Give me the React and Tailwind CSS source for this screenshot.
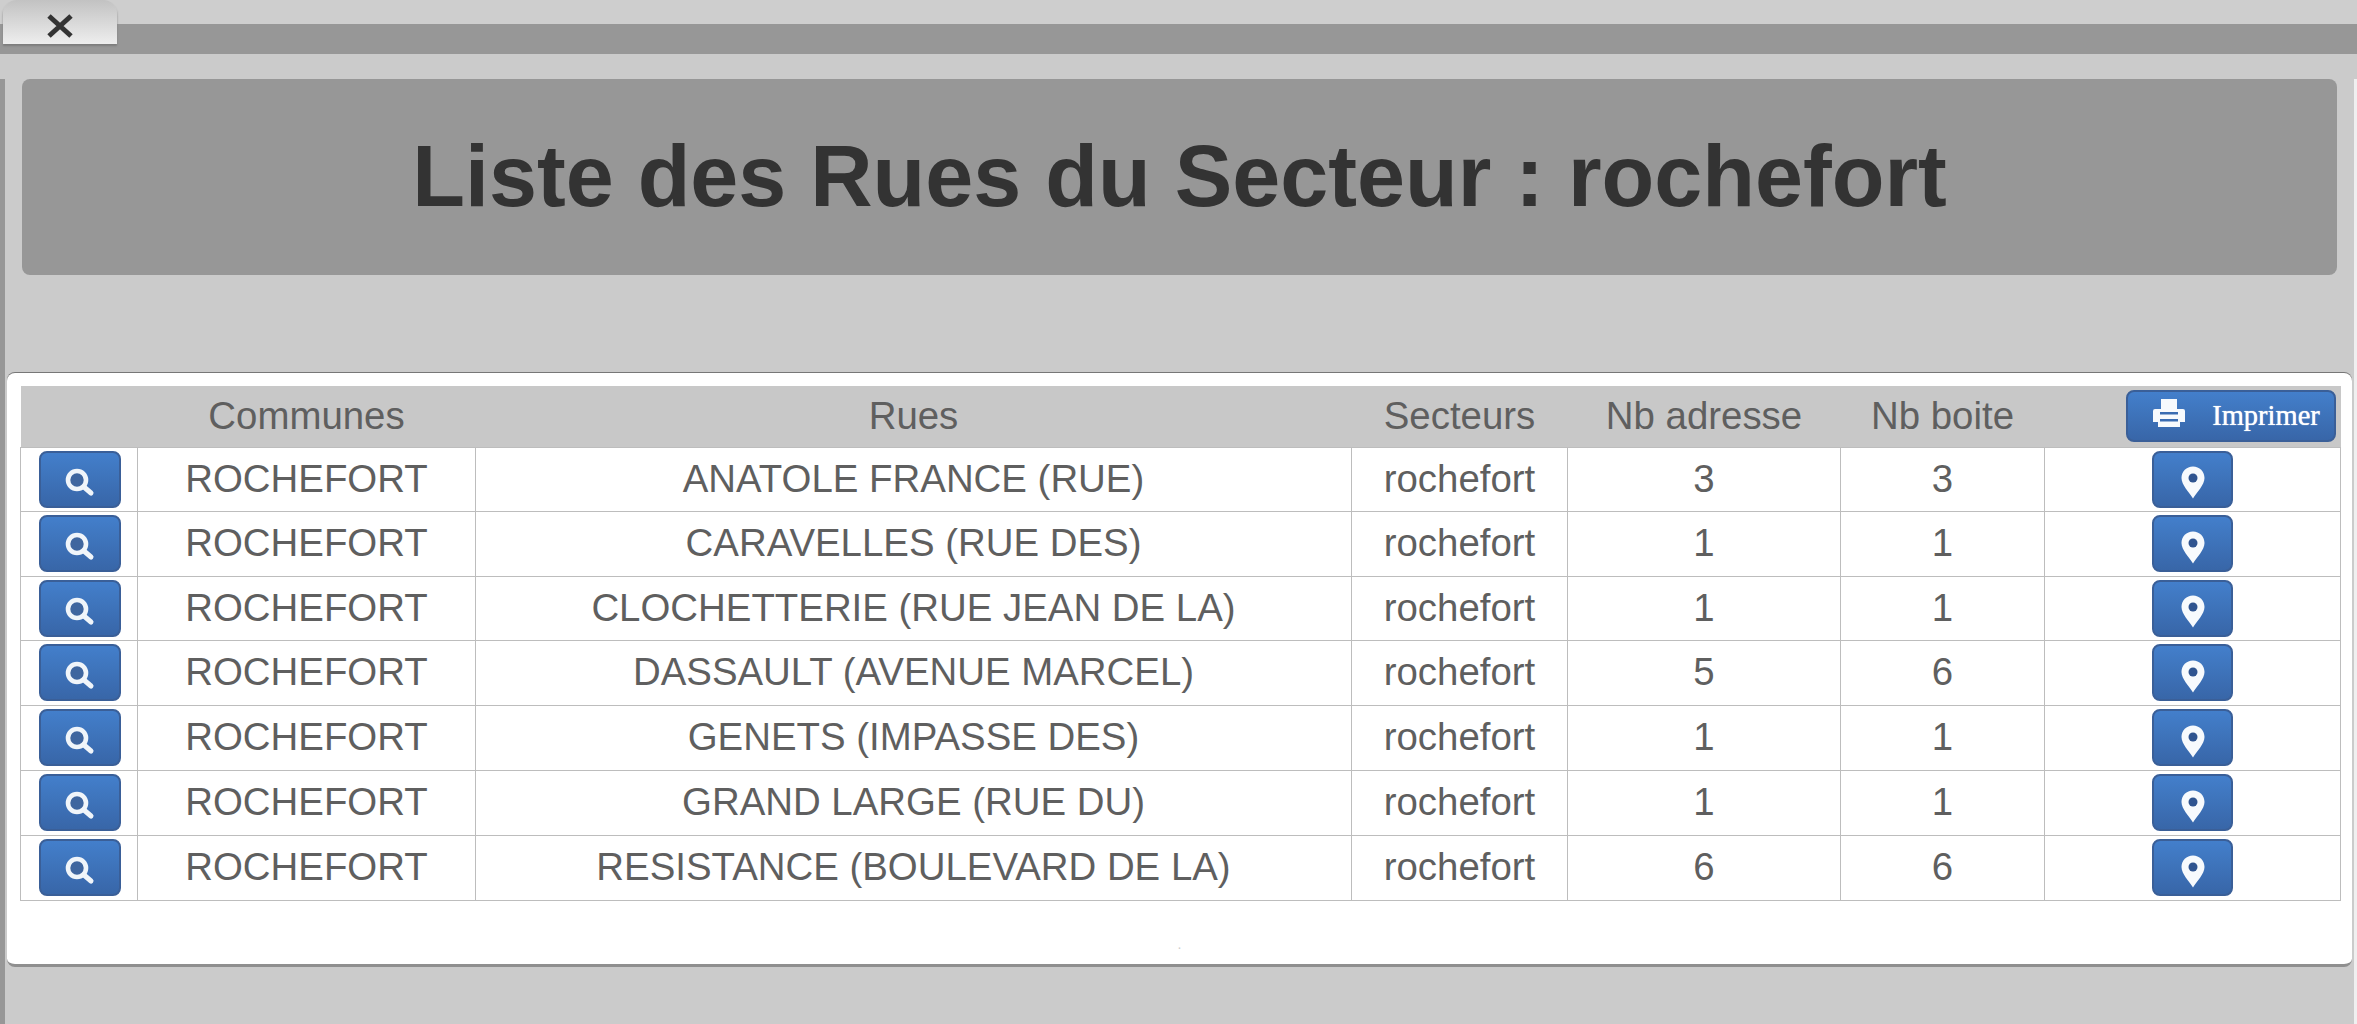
const streets = [
  ["ANATOLE FRANCE (RUE)", 3, 3, "h-[64px]"],
  ["CARAVELLES (RUE DES)", 1, 1, "h-[65px]"],
  ["CLOCHETTERIE (RUE JEAN DE LA)", 1, 1, "h-[64px]"],
  ["DASSAULT (AVENUE MARCEL)", 5, 6, "h-[65px]"],
  ["GENETS (IMPASSE DES)", 1, 1, "h-[65px]"],
  ["GRAND LARGE (RUE DU)", 1, 1, "h-[65px]"],
  ["RESISTANCE (BOULEVARD DE LA)", 6, 6, "h-[65px]"],
];

const btn =
  "flex items-center justify-center rounded-lg border-2 border-[#3a5f98] bg-gradient-to-b from-[#437fcb] to-[#3866a8] text-white";

function SearchIcon() {
  return (
    <svg width="32" height="32" viewBox="0 0 32 32" className="mt-[7px]">
      <circle cx="13" cy="13" r="9" fill="#3f669f" stroke="#f0f5fa" strokeWidth="4.6" />
      <path d="M20 20 L27 26" stroke="#f0f5fa" strokeWidth="5" strokeLinecap="round" />
    </svg>
  );
}

function PinIcon() {
  return (
    <svg width="24" height="33" viewBox="0 0 24 33" className="mt-[7px]">
      <path fill="#f7fafd" d="M12 0.5C5.5 0.5 0.5 5.5 0.5 12 0.5 19 8 26 12 32.5 16 26 23.5 19 23.5 12 23.5 5.5 18.5 0.5 12 0.5Z" />
      <circle cx="12" cy="12" r="4.5" fill="#2f5490" />
    </svg>
  );
}

function PrintIcon() {
  return (
    <svg width="32" height="30" viewBox="0 0 32 30" className="mt-[-4px]">
      <path fill="#f7fafd" d="M8 0H24V10H8ZM2 10H30Q32 10 32 12V23H27V28H5V23H0V12Q0 10 2 10Z" />
      <path fill="#3a6cb2" d="M7 13H25V15.5H7ZM7 20H25V22.5H7Z" />
    </svg>
  );
}

export default function App() {
  return (
    <div className="h-[1024px] overflow-hidden bg-[#cbcbcb] font-['Liberation_Sans',Arial,sans-serif] text-[#5f5f5f]">
      {/* Top strip with the close tab */}
      <div className="relative h-[24px] bg-[#cecece]">
        <div className="absolute left-[3px] top-0 z-10 flex h-[44px] w-[114px] items-center justify-center rounded-t-[14px] bg-gradient-to-b from-[#c2c2c2] to-[#eeeeee] shadow-[0_2px_2px_#7d7d7d]">
          <svg width="30" height="26" viewBox="0 0 30 26" className="mt-[8px]">
            <path d="M4 3 L26 23 M26 3 L4 23" stroke="#333" strokeWidth="5" />
          </svg>
        </div>
      </div>
      <div className="h-[30px] bg-[#979797]" />

      <div className="h-[970px] border-l-[5px] border-r-[3px] border-l-[#979797] border-r-[#f0f0f0] px-[2px]">
        <div className="mx-[15px] mt-[25px] flex h-[196px] items-center justify-center rounded-lg bg-[#979797]">
          <h1 className="text-[86.3px] font-bold text-[#333]">Liste des Rues du Secteur : rochefort</h1>
        </div>

        <div className="mt-[98px] h-[594px] rounded-lg border-b-[3px] border-b-[#8f8f8f] bg-white px-[13px] pt-[13px] shadow-[0_-1px_0_#777]">
          <table className="w-[2320px] table-fixed border-collapse text-center text-[38.4px] leading-none">
            <colgroup>
              <col className="w-[117px]" />
              <col className="w-[338px]" />
              <col className="w-[876px]" />
              <col className="w-[216px]" />
              <col className="w-[273px]" />
              <col className="w-[204px]" />
              <col className="w-[296px]" />
            </colgroup>
            <thead>
              <tr className="h-[61px] bg-[#c8c8c8]">
                <th />
                <th className="font-normal">Communes</th>
                <th className="font-normal">Rues</th>
                <th className="font-normal">Secteurs</th>
                <th className="font-normal">Nb adresse</th>
                <th className="font-normal">Nb boite</th>
                <th className="font-normal">
                  <div className={`${btn} ml-[81px] h-[52px] w-[210px] gap-[27px] pl-[12px]`}>
                    <PrintIcon />
                    <span className="font-['Liberation_Serif',serif] text-[28.5px] [text-shadow:0_0_1px_#fff]">Imprimer</span>
                  </div>
                </th>
              </tr>
            </thead>
            <tbody>
              {streets.map(([name, addresses, boxes, height]) => (
                <tr key={name} className={height}>
                  <td className="border border-[#bdbdbd]">
                    <div className={`${btn} ml-[18px] h-[57px] w-[82px]`}>
                      <SearchIcon />
                    </div>
                  </td>
                  <td className="border border-[#bdbdbd]">ROCHEFORT</td>
                  <td className="border border-[#bdbdbd]">{name}</td>
                  <td className="border border-[#bdbdbd]">rochefort</td>
                  <td className="border border-[#bdbdbd]">{addresses}</td>
                  <td className="border border-[#bdbdbd]">{boxes}</td>
                  <td className="border border-[#bdbdbd]">
                    <div className={`${btn} ml-[107px] h-[57px] w-[81px]`}>
                      <PinIcon />
                    </div>
                  </td>
                </tr>
              ))}
            </tbody>
          </table>
          <div className="mt-[33px] text-center text-[14px] text-[#cccccc]">.</div>
        </div>
      </div>
    </div>
  );
}
